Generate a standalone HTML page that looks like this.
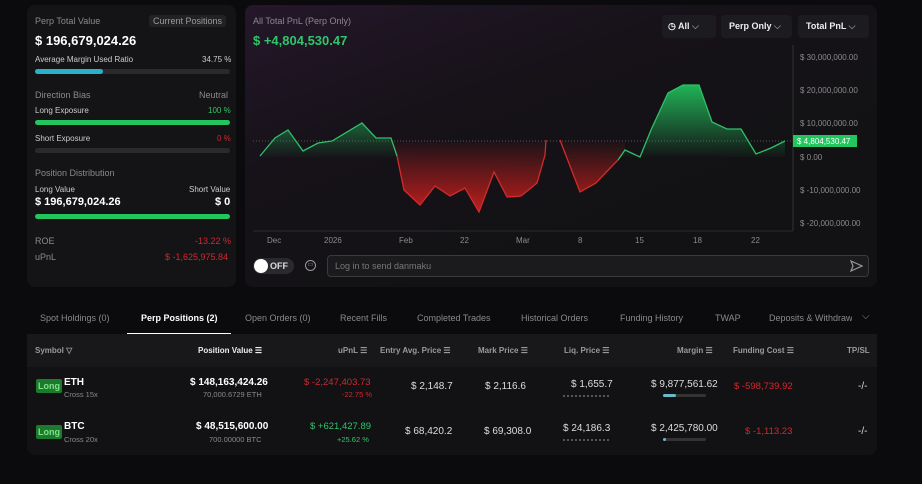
<!DOCTYPE html>
<html><head><meta charset="utf-8"><style>
*{margin:0;padding:0;box-sizing:border-box}
body{width:922px;height:484px;background:#0b0b0d;font-family:"Liberation Sans",sans-serif;color:#ddd;position:relative;overflow:hidden}
.a{position:absolute;white-space:nowrap}
.card{position:absolute;background:#151517;border-radius:8px}
.g{color:#2fc56a}.r{color:#d2272f}.m{color:#8a8a8e}
.bar{position:absolute;height:5px;border-radius:3px;background:#2a2a2d}
.t{font-size:8px}
.hd{font-size:8px;color:#9a9a9e;font-weight:bold}
.long{position:absolute;background:#1c7a2c;color:#7ee08a;font-size:9px;font-weight:bold;padding:2px 2px;border-radius:2px}
</style></head><body>
<div class="card" style="left:27px;top:5px;width:209px;height:282px;background:#141416"></div>
<div class="card" style="left:245px;top:5px;width:632px;height:282px;background:linear-gradient(160deg,#24172a 0%,#161218 35%,#121214 70%)"></div>

<div class="a m" style="left:35px;top:16px;font-size:9px">Perp Total Value</div>
<div class="a" style="left:149px;top:15px;font-size:9px;background:#222225;color:#9a9a9e;padding:1px 4px;border-radius:3px">Current Positions</div>
<div class="a" style="left:35px;top:33px;font-size:13px;font-weight:bold;color:#fff">$ 196,679,024.26</div>
<div class="a t" style="left:35px;top:55px;color:#ccc">Average Margin Used Ratio</div>
<div class="a t" style="left:202px;top:55px;color:#ccc">34.75 %</div>
<div class="bar" style="left:35px;top:69px;width:195px"></div>
<div class="bar" style="left:35px;top:69px;width:68px;background:#2ab0c8"></div>
<div class="a m" style="left:35px;top:90px;font-size:9px">Direction Bias</div>
<div class="a m" style="left:199px;top:90px;font-size:9px">Neutral</div>
<div class="a t" style="left:35px;top:106px;color:#ccc">Long Exposure</div>
<div class="a t g" style="left:208px;top:106px">100 %</div>
<div class="bar" style="left:35px;top:120px;width:195px;background:#22c55e"></div>
<div class="a t" style="left:35px;top:134px;color:#ccc">Short Exposure</div>
<div class="a t r" style="left:217px;top:134px">0 %</div>
<div class="bar" style="left:35px;top:148px;width:195px"></div>
<div class="a m" style="left:35px;top:168px;font-size:9px">Position Distribution</div>
<div class="a t" style="left:35px;top:185px;color:#ccc">Long Value</div>
<div class="a t" style="left:189px;top:185px;color:#ccc">Short Value</div>
<div class="a" style="left:35px;top:196px;font-size:11px;font-weight:bold;color:#fff">$ 196,679,024.26</div>
<div class="a" style="left:215px;top:196px;font-size:11px;font-weight:bold;color:#fff">$ 0</div>
<div class="bar" style="left:35px;top:214px;width:195px;background:#22c55e"></div>
<div class="a m" style="left:35px;top:236px;font-size:9px">ROE</div>
<div class="a r" style="left:195px;top:236px;font-size:9px">-13.22 %</div>
<div class="a m" style="left:35px;top:252px;font-size:9px">uPnL</div>
<div class="a r" style="left:165px;top:252px;font-size:9px">$ -1,625,975.84</div>

<div class="a m" style="left:253px;top:16px;font-size:9px">All Total PnL (Perp Only)</div>
<div class="a g" style="left:253px;top:33px;font-size:13px;font-weight:bold">$ +4,804,530.47</div>
<div class="a" style="left:662px;top:15px;width:54px;height:23px;background:#1c1c20;border-radius:4px;font-size:9px;font-weight:bold;color:#eee;padding:6px 0 0 6px">◷ All <span class="m">⌵</span></div>
<div class="a" style="left:721px;top:15px;width:71px;height:23px;background:#1c1c20;border-radius:4px;font-size:9px;font-weight:bold;color:#eee;padding:6px 0 0 8px">Perp Only <span class="m">⌵</span></div>
<div class="a" style="left:798px;top:15px;width:71px;height:23px;background:#1c1c20;border-radius:4px;font-size:9px;font-weight:bold;color:#eee;padding:6px 0 0 8px">Total PnL <span class="m">⌵</span></div>

<svg class="a" style="left:0;top:0" width="922" height="290">
<defs>
<linearGradient id="gg" x1="0" y1="85" x2="0" y2="157" gradientUnits="userSpaceOnUse"><stop offset="0" stop-color="#22c55e" stop-opacity=".9"/><stop offset="1" stop-color="#22c55e" stop-opacity=".02"/></linearGradient>
<linearGradient id="rg" x1="0" y1="140" x2="0" y2="212" gradientUnits="userSpaceOnUse"><stop offset="0" stop-color="#e02020" stop-opacity=".02"/><stop offset="1" stop-color="#e02020" stop-opacity=".85"/></linearGradient>
<clipPath id="up"><rect x="250" y="40" width="560" height="117"/></clipPath>
<clipPath id="dn"><rect x="250" y="141" width="560" height="100"/></clipPath>
</defs>
<line x1="253" y1="141" x2="793" y2="141" stroke="#555" stroke-dasharray="1,2"/>
<line x1="793" y1="45" x2="793" y2="231" stroke="#333"/>
<line x1="253" y1="231" x2="793" y2="231" stroke="#2a2a2a"/>
<g clip-path="url(#up)">
<polygon fill="url(#gg)" points="260,157 260,156 275,138 288,130 303,151 318,143 332,141 362,123 376,138 391,138 397,157"/>
<polygon fill="url(#gg)" points="613,165 625,150 640,157 651,130 668,93 683,85 699,85 712,122 727,129 741,129 756,154 771,148 785,141 785,157 613,157"/>
</g>
<g clip-path="url(#dn)">
<polygon fill="url(#rg)" points="391,141 397,156 404,190 420,205 435,186 450,196 465,188 479,212 494,172 507,197 521,196 537,183 545,155 546,140"/>
<polygon fill="url(#rg)" points="560,140 580,192 596,183 613,165 625,150 625,141"/>
</g>
<polyline fill="none" stroke="#2fbf68" stroke-width="1.3" points="260,156 275,138 288,130 303,151 318,143 332,141 362,123 376,138 391,138 397,156"/>
<polyline fill="none" stroke="#d42a2a" stroke-width="1.3" points="397,156 404,190 420,205 435,186 450,196 465,188 479,212 494,172 507,197 521,196 537,183 545,155 546,140"/>
<polyline fill="none" stroke="#d42a2a" stroke-width="1.3" points="560,140 580,192 596,183 613,165 618,160"/>
<polyline fill="none" stroke="#2fbf68" stroke-width="1.3" points="618,160 625,150 640,157 651,130 668,93 683,85 699,85 712,122 727,129 741,129 756,154 771,148 785,141"/>
<g font-size="8" fill="#8a8a8e" font-family="Liberation Sans">
<text x="800" y="60">$ 30,000,000.00</text><text x="800" y="93">$ 20,000,000.00</text><text x="800" y="126">$ 10,000,000.00</text><text x="800" y="160">$ 0.00</text><text x="800" y="193">$ -10,000,000.00</text><text x="800" y="226">$ -20,000,000.00</text>
<text x="267" y="243">Dec</text><text x="324" y="243">2026</text><text x="399" y="243">Feb</text><text x="460" y="243">22</text><text x="516" y="243">Mar</text><text x="578" y="243">8</text><text x="635" y="243">15</text><text x="693" y="243">18</text><text x="751" y="243">22</text>
</g>
<rect x="793" y="135" width="64" height="12" fill="#22c55e"/>
<text x="797" y="144" font-size="8" fill="#fff" font-family="Liberation Sans">$ 4,804,530.47</text>
</svg>

<div class="a" style="left:253px;top:258px;width:41px;height:16px;background:#2a2a2e;border-radius:8px"></div>
<div class="a" style="left:254px;top:259px;width:14px;height:14px;background:#fff;border-radius:50%"></div>
<div class="a" style="left:270px;top:261px;font-size:9px;font-weight:bold;color:#ddd">OFF</div>
<div class="a" style="left:305px;top:260px;width:11px;height:11px;border:1px solid #999;border-radius:50%;font-size:6px;color:#999;text-align:center;line-height:9px">▭</div>
<div class="a" style="left:327px;top:255px;width:542px;height:22px;background:#1b1b1e;border:1px solid #3a3a3e;border-radius:4px;font-size:9px;color:#77777b;padding:5px 0 0 7px">Log in to send danmaku</div>
<svg class="a" style="left:849px;top:259px" width="14" height="14"><path d="M2 2 L13 7 L2 12 L4 7 Z" fill="none" stroke="#999" stroke-width="1.2"/></svg>

<div class="a m" style="left:40px;top:313px;font-size:9px">Spot Holdings (0)</div>
<div class="a" style="left:141px;top:313px;font-size:9px;font-weight:bold;color:#fff">Perp Positions (2)</div>
<div class="a" style="left:127px;top:333px;width:104px;height:2px;background:#fff"></div>
<div class="a m" style="left:245px;top:313px;font-size:9px">Open Orders (0)</div>
<div class="a m" style="left:340px;top:313px;font-size:9px">Recent Fills</div>
<div class="a m" style="left:417px;top:313px;font-size:9px">Completed Trades</div>
<div class="a m" style="left:521px;top:313px;font-size:9px">Historical Orders</div>
<div class="a m" style="left:620px;top:313px;font-size:9px">Funding History</div>
<div class="a m" style="left:715px;top:313px;font-size:9px">TWAP</div>
<div class="a m" style="left:769px;top:313px;font-size:9px;width:83px;overflow:hidden">Deposits &amp; Withdrawals</div>
<div class="a m" style="left:862px;top:311px;font-size:10px">⌵</div>

<div class="card" style="left:27px;top:334px;width:850px;height:121px;background:#121214;border-radius:0 0 8px 8px"></div>
<div class="a" style="left:27px;top:334px;width:850px;height:33px;background:#18181a"></div>
<div class="a hd" style="left:35px;top:346px">Symbol ▽</div>
<div class="a hd" style="left:198px;top:346px;color:#eee">Position Value ☰</div>
<div class="a hd" style="left:338px;top:346px">uPnL ☰</div>
<div class="a hd" style="left:380px;top:346px">Entry Avg. Price ☰</div>
<div class="a hd" style="left:478px;top:346px">Mark Price ☰</div>
<div class="a hd" style="left:564px;top:346px">Liq. Price ☰</div>
<div class="a hd" style="left:677px;top:346px">Margin ☰</div>
<div class="a hd" style="left:733px;top:346px">Funding Cost ☰</div>
<div class="a hd" style="left:847px;top:346px">TP/SL</div>

<div class="long" style="left:36px;top:379px">Long</div>
<div class="a" style="left:64px;top:377px;font-size:10px;font-weight:bold;color:#fff">ETH</div>
<div class="a m" style="left:64px;top:390px;font-size:7.5px">Cross 15x</div>
<div class="a" style="left:190px;top:377px;font-size:10px;font-weight:bold;color:#fff">$ 148,163,424.26</div>
<div class="a m" style="left:203px;top:390px;font-size:7.5px">70,000.6729 ETH</div>
<div class="a r" style="left:304px;top:377px;font-size:9.5px">$ -2,247,403.73</div>
<div class="a r" style="left:342px;top:390px;font-size:7.5px">-22.75 %</div>
<div class="a" style="left:411px;top:381px;font-size:10px;color:#ddd">$ 2,148.7</div>
<div class="a" style="left:485px;top:381px;font-size:10px;color:#ddd">$ 2,116.6</div>
<div class="a" style="left:571px;top:379px;font-size:10px;color:#ddd">$ 1,655.7</div>
<div class="a" style="left:563px;top:395px;width:46px;border-top:2px dotted #555"></div>
<div class="a" style="left:651px;top:379px;font-size:10px;color:#ddd">$ 9,877,561.62</div>
<div class="bar" style="left:663px;top:394px;width:43px;height:3px;background:#333"></div>
<div class="bar" style="left:663px;top:394px;width:13px;height:3px;background:#6ab8c8"></div>
<div class="a r" style="left:734px;top:381px;font-size:9.5px">$ -598,739.92</div>
<div class="a" style="left:858px;top:381px;font-size:10px;color:#ddd">-/-</div>

<div class="long" style="left:36px;top:425px">Long</div>
<div class="a" style="left:64px;top:421px;font-size:10px;font-weight:bold;color:#fff">BTC</div>
<div class="a m" style="left:64px;top:435px;font-size:7.5px">Cross 20x</div>
<div class="a" style="left:196px;top:421px;font-size:10px;font-weight:bold;color:#fff">$ 48,515,600.00</div>
<div class="a m" style="left:209px;top:435px;font-size:7.5px">700.00000 BTC</div>
<div class="a g" style="left:310px;top:421px;font-size:9.5px">$ +621,427.89</div>
<div class="a g" style="left:337px;top:435px;font-size:7.5px">+25.62 %</div>
<div class="a" style="left:405px;top:426px;font-size:10px;color:#ddd">$ 68,420.2</div>
<div class="a" style="left:484px;top:426px;font-size:10px;color:#ddd">$ 69,308.0</div>
<div class="a" style="left:563px;top:423px;font-size:10px;color:#ddd">$ 24,186.3</div>
<div class="a" style="left:563px;top:439px;width:46px;border-top:2px dotted #555"></div>
<div class="a" style="left:651px;top:423px;font-size:10px;color:#ddd">$ 2,425,780.00</div>
<div class="bar" style="left:663px;top:438px;width:43px;height:3px;background:#333"></div>
<div class="bar" style="left:663px;top:438px;width:3px;height:3px;background:#6ab8c8"></div>
<div class="a r" style="left:745px;top:426px;font-size:9.5px">$ -1,113.23</div>
<div class="a" style="left:858px;top:426px;font-size:10px;color:#ddd">-/-</div>
</body></html>
